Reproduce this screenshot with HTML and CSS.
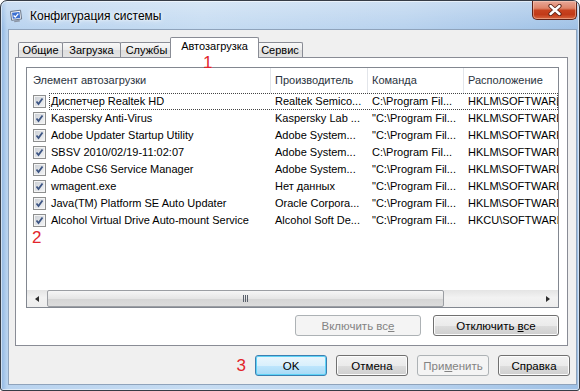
FILE: index.html
```html
<!DOCTYPE html>
<html lang="ru">
<head>
  <meta charset="UTF-8">
  <title>Конфигурация системы</title>
  <link rel="stylesheet" href="styles.css">
</head>
<body>
  <div class="window">
    <div class="titlebar">
      <svg class="app-icon" viewBox="0 0 14 14">
        <path d="M1.5 2.5 L11.5 1.2 L12.6 10 L2.6 11.3 Z" fill="#f4f6fa" stroke="#6b7688" stroke-width="1"/>
        <path d="M3 3.8 L10.4 2.9 L11.2 8.9 L3.8 9.8 Z" fill="#3c6fd0"/>
        <path d="M4.6 6.6 L6.3 8.1 L9.3 4.6" fill="none" stroke="#fff" stroke-width="1.3"/>
        <path d="M5 11.6 L10.5 10.9 L11 12.6 L5.4 13.3 Z" fill="#8b94a3"/>
      </svg>
      <span class="title">Конфигурация системы</span>
      <button class="close-btn">
        <svg viewBox="0 0 14 12" width="14" height="12">
          <path d="M2.5 2 L11.5 10 M11.5 2 L2.5 10" stroke="#5a2418" stroke-width="4.2" stroke-linecap="round"/>
          <path d="M2.5 2 L11.5 10 M11.5 2 L2.5 10" stroke="#fff" stroke-width="2.4" stroke-linecap="round"/>
        </svg>
      </button>
    </div>

    <div class="client">
      <div class="tabs">
        <div class="tab t-general">Общие</div>
        <div class="tab t-boot">Загрузка</div>
        <div class="tab t-services">Службы</div>
        <div class="tab t-startup active">Автозагрузка</div>
        <div class="tab t-tools">Сервис</div>
        <span class="mark mark-1">1</span>
      </div>

      <div class="panel">
        <div class="listview">
          <div class="lv-header">
            <div class="hcell">Элемент автозагрузки</div>
            <div class="hcell">Производитель</div>
            <div class="hcell">Команда</div>
            <div class="hcell">Расположение</div>
          </div>
          <div class="lv-body">
            <div class="row focused">
              <div class="cell first"><span class="check"></span>Диспетчер Realtek HD</div>
              <div class="cell">Realtek Semico...</div>
              <div class="cell">C:\Program Fil...</div>
              <div class="cell">HKLM\SOFTWARE</div>
            </div>
            <div class="row">
              <div class="cell first"><span class="check"></span>Kaspersky Anti-Virus</div>
              <div class="cell">Kaspersky Lab ...</div>
              <div class="cell">"C:\Program Fil...</div>
              <div class="cell">HKLM\SOFTWARE</div>
            </div>
            <div class="row">
              <div class="cell first"><span class="check"></span>Adobe Updater Startup Utility</div>
              <div class="cell">Adobe System...</div>
              <div class="cell">"C:\Program Fil...</div>
              <div class="cell">HKLM\SOFTWARE</div>
            </div>
            <div class="row">
              <div class="cell first"><span class="check"></span>SBSV 2010/02/19-11:02:07</div>
              <div class="cell">Adobe System...</div>
              <div class="cell">C:\Program Fil...</div>
              <div class="cell">HKLM\SOFTWARE</div>
            </div>
            <div class="row">
              <div class="cell first"><span class="check"></span>Adobe CS6 Service Manager</div>
              <div class="cell">Adobe System...</div>
              <div class="cell">"C:\Program Fil...</div>
              <div class="cell">HKLM\SOFTWARE</div>
            </div>
            <div class="row">
              <div class="cell first"><span class="check"></span>wmagent.exe</div>
              <div class="cell">Нет данных</div>
              <div class="cell">"C:\Program Fil...</div>
              <div class="cell">HKLM\SOFTWARE</div>
            </div>
            <div class="row">
              <div class="cell first"><span class="check"></span>Java(TM) Platform SE Auto Updater</div>
              <div class="cell">Oracle Corpora...</div>
              <div class="cell">"C:\Program Fil...</div>
              <div class="cell">HKLM\SOFTWARE</div>
            </div>
            <div class="row">
              <div class="cell first"><span class="check"></span>Alcohol Virtual Drive Auto-mount Service</div>
              <div class="cell">Alcohol Soft De...</div>
              <div class="cell">"C:\Program Fil...</div>
              <div class="cell">HKCU\SOFTWARE</div>
            </div>
            <div class="mark mark-2">2</div>
          </div>
          <div class="hscroll">
            <div class="sb-arrow"><span class="tri left"></span></div>
            <div class="sb-thumb">
              <svg width="7" height="7" viewBox="0 0 7 7"><path d="M1.5 0 V7 M3.5 0 V7 M5.5 0 V7" stroke="#59606b" stroke-width="1"/></svg>
            </div>
            <div class="sb-track"></div>
            <div class="sb-arrow"><span class="tri right"></span></div>
          </div>
        </div>
        <div class="panel-buttons">
          <button class="btn wide" disabled>Включить вс<u>е</u></button>
          <button class="btn wide">Отключить <u>в</u>се</button>
        </div>
      </div>

      <div class="dialog-buttons">
        <span class="mark mark-3">3</span>
        <button class="btn default">OK</button>
        <button class="btn">Отмена</button>
        <button class="btn" disabled>При<u>м</u>енить</button>
        <button class="btn">Справка</button>
      </div>
    </div>
  </div>
</body>
</html>
```

FILE: styles.css
```css
html, body {
  margin: 0; padding: 0;
  background: #fff;
}
body {
  font-family: "Liberation Sans", Arial, sans-serif;
  font-size: 11px; color: #000;
}
.window {
  width: 580px; height: 391px; box-sizing: border-box;
  border: 1px solid #363c46; border-radius: 7px 7px 3px 3px;
  background:
    linear-gradient(180deg, rgba(255,255,255,.3) 0, rgba(255,255,255,0) 28px),
    linear-gradient(90deg, #8fb6e2 0, #b9d3ef 6px, #c6dcf2 35%, #b8d2ee 70%, #9fc1e6 100%);
  box-shadow: inset 0 0 0 1px rgba(255,255,255,.55);
  display: flex; flex-direction: column; overflow: hidden;
}
.titlebar {
  height: 28px; flex: none;
  display: flex; align-items: flex-start;
}
.app-icon { width: 14px; height: 14px; margin: 8px 0 0 8px; }
.title {
  margin: 8px 0 0 7px; line-height: 15px; font-size: 12px;
  text-shadow: 0 0 6px #fff, 0 0 3px #fff;
}
.close-btn {
  margin-left: auto; margin-right: 2px;
  width: 45px; height: 19px; padding: 0;
  border: 1px solid #5e2117; border-top: 0;
  border-radius: 0 0 5px 5px;
  background: linear-gradient(180deg, #e8a898 0%, #df8469 40%, #c8421f 52%, #c23a18 75%, #d7653f 100%);
  box-shadow: inset 0 0 0 1px rgba(255,220,200,.45);
  display: flex; align-items: center; justify-content: center;
}

/* client area */
.client {
  flex: 1; margin: 0 2px 5px 7px;
  border: 1px solid #8fa3bb;
  background: #f0f0f0;
  padding: 7px 8px 0 6px;
  display: flex; flex-direction: column;
}
.tabs {
  height: 21px; margin-bottom: -1px; padding-left: 3px;
  display: flex; align-items: flex-end;
  position: relative; z-index: 1;
}
.tab {
  flex: none; box-sizing: border-box; text-align: center;
  height: 15px; line-height: 14px; margin-bottom: 1px;
  border: 1px solid #898c95; border-bottom: 0; margin-right: -1px;
  border-radius: 2px 2px 0 0;
  background: linear-gradient(180deg, #f8f8f8 0%, #ececec 50%, #dedede 51%, #e4e4e4 100%);
  white-space: nowrap;
}
.t-general { width: 45px; }
.t-boot { width: 59px; }
.t-services { width: 53px; }
.t-tools { width: 46px; }
.tab.active {
  width: 89px; height: 21px; line-height: 15px; padding-top: 1px; margin: 0 -1px 0 -2px;
  background: #fff; position: relative; z-index: 2;
}
.tab.active + .tab { margin-left: -1px; }

.panel {
  border: 1px solid #898c95; background: #fff;
  padding: 9px 8px 9px 10px;
}
.listview {
  height: 241px; box-sizing: border-box;
  border: 1px solid #828790; background: #fff;
  display: flex; flex-direction: column; overflow: hidden;
}
.lv-header, .row {
  display: grid; grid-template-columns: 243px 97px 96px 200px;
}
.lv-header { height: 25px; flex: none; }
.hcell {
  line-height: 25px; padding-left: 4px; white-space: nowrap;
  border-left: 1px solid #e2e5ea; color: #2a3340;
}
.hcell:first-child { border-left: 0; padding-left: 6px; }
.lv-body { flex: 1; overflow: hidden; }
.row { height: 17px; line-height: 17px; position: relative; }
.cell { padding-left: 5px; white-space: nowrap; overflow: hidden; }
.cell.first { padding-left: 6px; display: flex; align-items: center; }
.row.focused::after {
  content: ""; position: absolute; left: 22px; right: 0; top: 0; bottom: 0;
  border: 1px dotted #444;
}
.check {
  width: 11px; height: 11px; margin-right: 5px; flex: none;
  border: 1px solid #8e8f8f;
  background:
    url("data:image/svg+xml;utf8,<svg xmlns='http://www.w3.org/2000/svg' viewBox='0 0 11 11'><path d='M2.5 5.5 L4.5 8 L8.5 2.5' fill='none' stroke='%233d5583' stroke-width='1.8'/></svg>") center/11px no-repeat,
    linear-gradient(135deg, #c9cdd3, #f5f6f7);
  box-shadow: inset 0 0 0 1px #f4f4f4;
}

.hscroll {
  height: 17px; flex: none; display: flex;
  background: linear-gradient(180deg, #e4e4e4 0, #f2f2f2 45%, #ededed 100%);
}
.sb-arrow {
  width: 20px; display: flex; align-items: center; justify-content: center;
}
.tri { width: 0; height: 0; border-top: 3.5px solid transparent; border-bottom: 3.5px solid transparent; }
.tri.left { border-right: 4px solid #2c2c2c; }
.tri.right { border-left: 4px solid #2c2c2c; }
.sb-thumb {
  width: 397px; box-sizing: border-box;
  border: 1px solid #9b9ea3; border-radius: 2px;
  background: linear-gradient(180deg, #f6f6f6 0%, #e6e6e6 50%, #d5d5d5 51%, #dcdcdc 100%);
  display: flex; align-items: center; justify-content: center;
}
.sb-track { flex: 1; }

/* buttons */
.panel-buttons, .dialog-buttons {
  display: flex; justify-content: flex-end; align-items: center;
}
.panel-buttons { margin-top: 7px; gap: 12px; }
.dialog-buttons { margin: 9px -2px 0 0; gap: 9px; }
.btn {
  width: 72px; height: 21px; padding: 0;
  font: inherit; font-size: 11.5px; color: #000;
  border: 1px solid #707070; border-radius: 3px;
  background: linear-gradient(180deg, #f2f2f2 0%, #ebebeb 50%, #dddddd 51%, #cfcfcf 100%);
  box-shadow: inset 0 0 0 1px #fcfcfc;
}
.btn.wide { width: 126px; }
.btn.default {
  border-color: #3c7fb1;
  background: linear-gradient(180deg, #eaf6fd 0%, #d9f0fc 50%, #bee6fd 51%, #a7d9f5 100%);
  box-shadow: inset 0 0 0 1px #5fd3f7;
}
.btn:disabled {
  border-color: #adb2b5; background: #f4f4f4; color: #838383; box-shadow: none;
}

/* red annotations */
.mark {
  color: #e2242b; font-family: "Liberation Sans", Arial, sans-serif;
  font-size: 17px; line-height: 17px;
}
.mark-1 { position: absolute; left: 188px; top: 17px; z-index: 3; }
.mark-2 { padding-left: 5px; height: 17px; }
```
